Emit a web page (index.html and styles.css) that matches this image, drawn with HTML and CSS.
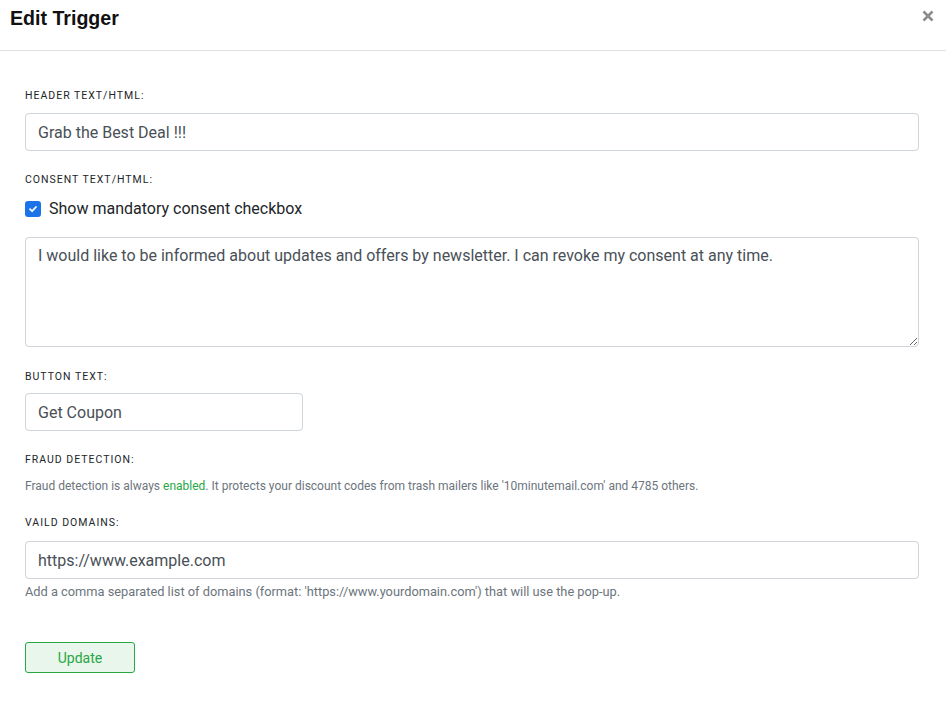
FILE: index.html
```html
<!DOCTYPE html>
<html lang="en">
<head>
<meta charset="utf-8">
<title>Edit Trigger</title>
<link rel="stylesheet" href="styles.css">
</head>
<body>
<div class="modal">
  <header class="modal-header">
    <h1 class="modal-title">Edit Trigger</h1>
    <button class="close" aria-label="Close">
      <svg width="12" height="12" viewBox="0 0 12 12"><path d="M1.5 1.5 L10.5 10.5 M10.5 1.5 L1.5 10.5" stroke="#8c8c8c" stroke-width="2.6" stroke-linecap="butt"/></svg>
    </button>
  </header>
  <main class="modal-body">
    <div class="group g1">
      <label class="label">Header Text/HTML:</label>
      <input class="control" type="text" value="Grab the Best Deal !!!">
    </div>
    <div class="group g2">
      <label class="label">Consent Text/HTML:</label>
      <div class="check-row">
        <span class="checkbox"><svg width="10" height="10" viewBox="0 0 10 10"><path d="M2 5.2 L4.1 7.2 L8 3" fill="none" stroke="#fff" stroke-width="1.8" stroke-linecap="round" stroke-linejoin="round"/></svg></span>
        <span class="check-text">Show mandatory consent checkbox</span>
      </div>
      <textarea class="control area">I would like to be informed about updates and offers by newsletter. I can revoke my consent at any time.</textarea>
    </div>
    <div class="group g3">
      <label class="label">Button Text:</label>
      <input class="control short" type="text" value="Get Coupon">
    </div>
    <div class="group g4">
      <label class="label">Fraud Detection:</label>
      <p class="help">Fraud detection is always <span class="ok">enabled</span>. It protects your discount codes from trash mailers like '10minutemail.com' and 4785 others.</p>
    </div>
    <div class="group g5">
      <label class="label">Vaild Domains:</label>
      <input class="control" type="text" value="https://www.example.com">
      <p class="help help-after">Add a comma separated list of domains (format: 'https://www.yourdomain.com') that will use the pop-up.</p>
    </div>
    <button class="btn-update">Update</button>
  </main>
</div>
</body>
</html>
```

FILE: styles.css
```css
* { box-sizing: border-box; }
html, body { margin: 0; padding: 0; background: #fff; }
body { font-family: Roboto, "Noto Sans", sans-serif; color: #212529; }

.modal-header {
  height: 51px;
  border-bottom: 1px solid #dee2e6;
  display: flex;
  justify-content: space-between;
  align-items: flex-start;
  padding: 6px 12px 0 10px;
}
.modal-title {
  margin: 0;
  font-family: "Liberation Sans", Arial, sans-serif;
  font-weight: bold;
  font-size: 19.6px;
  line-height: 24px;
  color: #111;
}
.close {
  border: 0;
  background: none;
  padding: 0;
  margin-top: 4px;
  width: 12px;
  height: 12px;
  display: flex;
}

.modal-body {
  padding: 39px 27px 30px 25px;
}
.label {
  display: block;
  font-size: 10.5px;
  line-height: 12px;
  letter-spacing: 1px;
  text-transform: uppercase;
  color: #212529;
  margin-bottom: 11px;
}
.control {
  display: block;
  width: 100%;
  height: 38px;
  border: 1px solid #ced4da;
  border-radius: 4px;
  padding: 0 12px;
  font-family: Roboto, "Noto Sans", sans-serif;
  font-size: 16px;
  color: #495057;
  background: #fff;
  outline: none;
}
.short { width: 278px; }
.area {
  height: 110px;
  padding: 6px 12px;
  line-height: 24px;
  resize: vertical;
}
.group { margin-bottom: 23px; }
.g2 { margin-bottom: 24px; }
.g2 .label { margin-bottom: 15px; }
.g3 .label { margin-bottom: 10px; }
.g4 { margin-bottom: 22px; }
.g5 .label { margin-bottom: 12px; }
.g5 { margin-bottom: 41px; }

.check-row {
  display: flex;
  align-items: center;
  gap: 8px;
  height: 16px;
  margin-bottom: 20px;
}
.checkbox {
  width: 16px;
  height: 16px;
  border-radius: 3px;
  background: #1a73e8;
  display: flex;
  align-items: center;
  justify-content: center;
}
.check-text {
  font-size: 16px;
  line-height: 16px;
  color: #212529;
}
.help {
  margin: 0;
  font-size: 12px;
  line-height: 18px;
  color: #6c757d;
}
.help-after { margin-top: 4px; font-size: 12.8px; }
.ok { color: #28a745; }

.btn-update {
  display: block;
  width: 110px;
  height: 31px;
  border: 1px solid #28a745;
  border-radius: 3px;
  background: #e9f6ec;
  color: #28a745;
  font-family: Roboto, "Noto Sans", sans-serif;
  font-size: 14px;
  padding: 0;
}
```
